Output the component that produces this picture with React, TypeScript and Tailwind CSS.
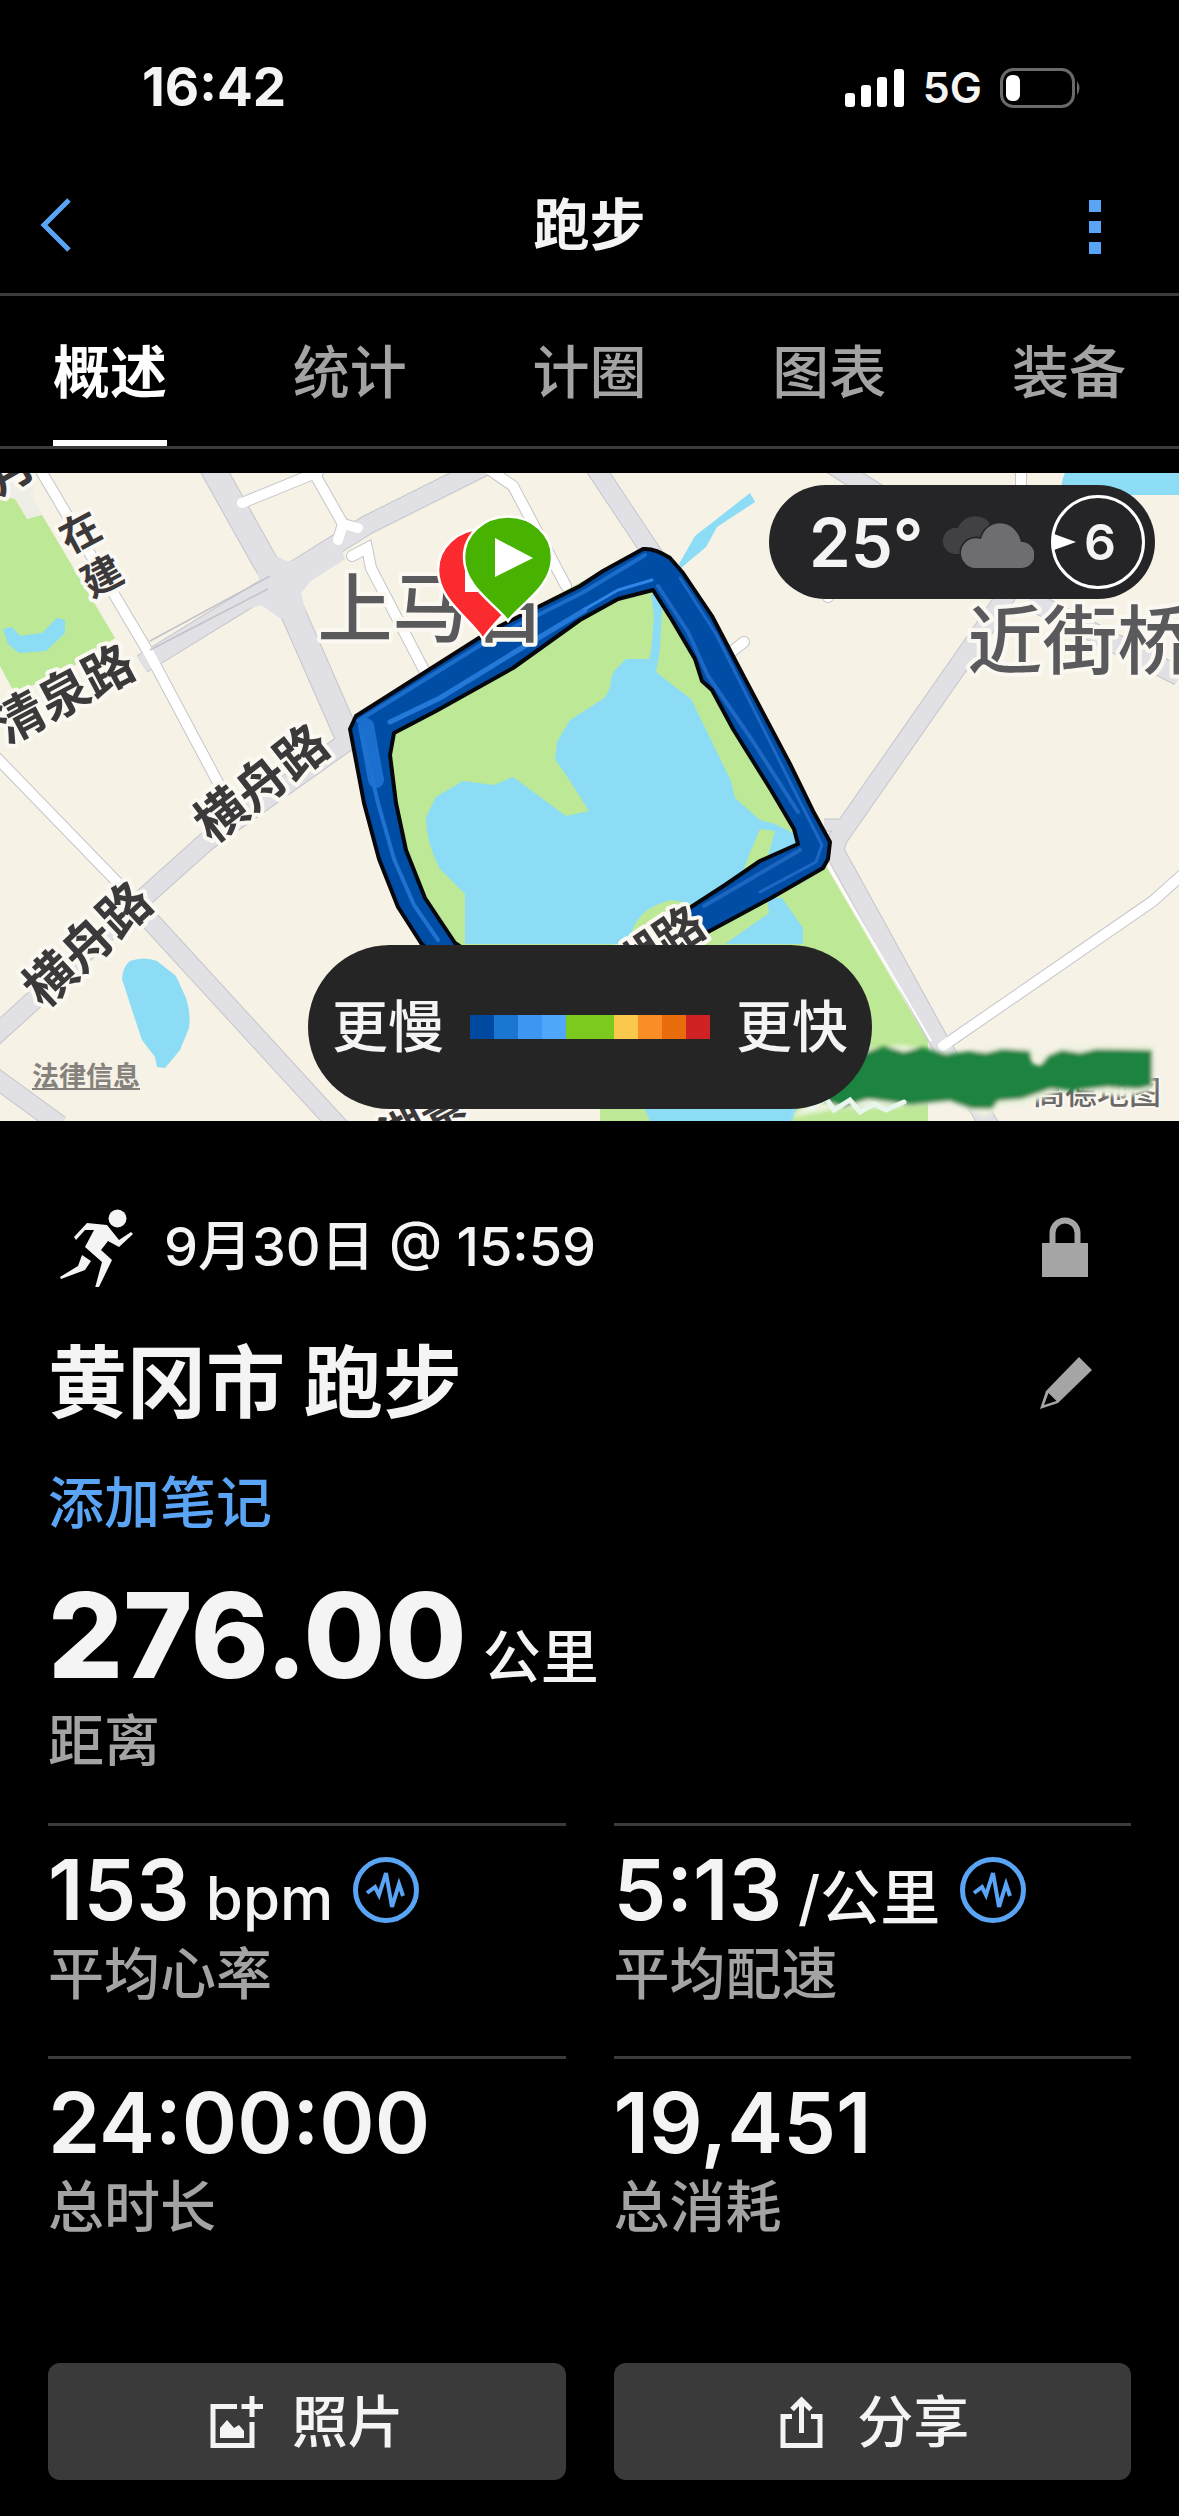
import type { ReactNode } from 'react'

const tabs = ['概述', '统计', '计圈', '图表', '装备']

const paceColors = [
  'bg-[#0049a0]',
  'bg-[#1b76d2]',
  'bg-[#3d96f2]',
  'bg-[#4fa7fb]',
  'bg-[#7bca1d]',
  'bg-[#7bca1d]',
  'bg-[#fac84c]',
  'bg-[#fa8d26]',
  'bg-[#e86b0c]',
  'bg-[#d02222]',
]

interface Stat {
  value: string
  unit?: string
  label: string
  graph?: boolean
}

const stats: Stat[] = [
  { value: '153', unit: 'bpm', label: '平均心率', graph: true },
  { value: '5:13', unit: '/公里', label: '平均配速', graph: true },
  { value: '24:00:00', label: '总时长' },
  { value: '19,451', label: '总消耗' },
]

export default function App() {
  return (
    <div className="min-h-screen bg-black pb-8 font-['Inter','Noto_Sans_CJK_SC',sans-serif] text-[#f4f4f4]">
      <StatusBar />

      <header className="flex h-[136px] items-center justify-between px-10">
        <button aria-label="返回" className="w-16 text-[#5aa4f5]">
          <svg width="32" height="54" viewBox="0 0 32 54" fill="none" stroke="currentColor" strokeWidth="5">
            <path d="M29 2L4 27l25 25" />
          </svg>
        </button>
        <h1 className="text-[56px] leading-none font-bold">跑步</h1>
        <button aria-label="更多" className="flex w-16 flex-col items-end gap-[9px] pt-1 pr-[38px]">
          <span className="h-3 w-3 bg-[#5aa4f5]" />
          <span className="h-3 w-3 bg-[#5aa4f5]" />
          <span className="h-3 w-3 bg-[#5aa4f5]" />
        </button>
      </header>

      <nav className="flex h-[156px] justify-between border-y-3 border-[#3b3b3b] px-[53px]">
        {tabs.map((tab, i) => (
          <button
            key={tab}
            className={
              i === 0
                ? 'border-b-6 border-white pt-2 text-[57px] leading-none font-bold text-white'
                : 'border-b-6 border-transparent pt-2 text-[57px] leading-none font-medium text-[#a3a3a3]'
            }
          >
            {tab}
          </button>
        ))}
      </nav>

      <section className="relative mt-6">
        <RouteMap />
        <WeatherBadge />
        <a href="#legal" className="absolute bottom-7 left-8 text-[27px] leading-8 font-bold text-[#85817c] underline">
          法律信息
        </a>
        <div className="absolute bottom-3 left-[308px] flex h-[164px] w-[564px] items-center justify-between rounded-full bg-[#252525] px-6 text-[56px] font-medium">
          <span>更慢</span>
          <div className="flex">
            {paceColors.map((color, i) => (
              <span key={i} className={`h-6 w-6 ${color}`} />
            ))}
          </div>
          <span>更快</span>
        </div>
      </section>

      <main className="px-12">
        <div className="mt-[86px] flex h-20 items-center justify-between pr-[43px]">
          <div className="flex items-center gap-6">
            <RunnerIcon />
            <p className="text-[54px] leading-none font-medium">9月30日 @ 15:59</p>
          </div>
          <svg width="46" height="60" viewBox="0 0 46 60" className="text-[#a5a5a5]">
            <path d="M10.500 30V16a12.500 12.500 0 0 1 25 0v14" fill="none" stroke="currentColor" strokeWidth="6" />
            <path d="M0 26h46v34H0z" fill="currentColor" />
          </svg>
        </div>

        <div className="mt-12 flex h-24 items-center justify-between pr-[39px]">
          <h2 className="text-[79px] leading-none font-bold">黄冈市 跑步</h2>
          <button aria-label="编辑">
            <svg width="52" height="52" viewBox="0 0 52 52" fill="#a5a5a5" fillRule="evenodd">
              <path d="M39 0l13 13-34 33L0 52l6-18zM8.500 36l-4.500 12 12.500-4z" />
            </svg>
          </button>
        </div>

        <a href="#note" className="mt-9 block w-fit text-[56px] leading-[72px] font-medium text-[#5aa4f5]">
          添加笔记
        </a>

        <div className="mt-9 flex items-baseline gap-4">
          <span className="text-[118px] leading-[120px] font-extrabold">276.00</span>
          <span className="text-[58px] leading-none font-medium">公里</span>
        </div>
        <p className="mt-2 text-[56px] leading-[76px] font-medium text-[#a3a3a3]">距离</p>

        <div className="mt-11 grid grid-cols-2 gap-x-12">
          {stats.map(stat => (
            <StatCell key={stat.label} {...stat} />
          ))}
        </div>

        <div className="mt-[74px] grid grid-cols-2 gap-x-12">
          <ActionButton label="照片">
            <svg width="54" height="52" viewBox="0 0 54 52" fill="none" stroke="currentColor" strokeWidth="5">
              <path d="M27 10.500H3v39h39V26" />
              <path d="M42 0v21M31.500 10.500H53" />
              <path d="M10 42V32l7-8 7 8 5-3 5 6v7z" fill="currentColor" stroke="none" />
            </svg>
          </ActionButton>
          <ActionButton label="分享">
            <svg width="54" height="52" viewBox="0 0 54 52" fill="none" stroke="currentColor" strokeWidth="5">
              <path d="M17 20.500H8v29h37v-29h-9" />
              <path d="M26.500 37V4M17 13.500L26.500 4l9.500 9.500" />
            </svg>
          </ActionButton>
        </div>
      </main>
    </div>
  )
}

function StatusBar() {
  return (
    <div className="flex h-[157px] items-center justify-between pt-[18px] pr-[97px] pl-[142px]">
      <span className="text-[53px] leading-none font-bold">16:42</span>
      <div className="flex items-center gap-[18px]">
        <svg width="60" height="38" viewBox="0 0 60 38" fill="#fff">
          <rect x="0" y="24" width="10" height="14" rx="3" />
          <rect x="16" y="16" width="10" height="22" rx="3" />
          <rect x="32" y="8" width="10" height="30" rx="3" />
          <rect x="49" y="0" width="10" height="38" rx="3" />
        </svg>
        <span className="text-[43px] leading-none font-semibold">5G</span>
        <svg width="82" height="40" viewBox="0 0 82 40">
          <rect x="1.500" y="1.500" width="72" height="37" rx="12" fill="none" stroke="#6a6a6a" strokeWidth="3" />
          <path d="M77 13q5 7 0 14z" fill="#6a6a6a" />
          <rect x="6" y="7" width="14" height="26" rx="6" fill="#fff" />
        </svg>
      </div>
    </div>
  )
}

function WeatherBadge() {
  return (
    <div className="absolute top-3 right-6 flex h-[114px] w-[386px] items-center justify-between rounded-full bg-[#252426] pr-2.5 pl-10">
      <span className="text-[67px] leading-none font-semibold">25°</span>
      <svg width="94" height="52" viewBox="0 0 94 52">
        <path d="M14 38a13 13 0 0 1 4-26C24-3 44-3 50 8L38 38z" fill="#414042" />
        <path
          d="M34 52a15 15 0 1 1 7-29C46 2 75 1 81 26a13 13 0 0 1 1 26z"
          fill="#6e6d6f"
          stroke="#252426"
          strokeWidth="3"
          paintOrder="stroke"
        />
      </svg>
      <div className="relative flex h-[94px] w-[94px] items-center justify-center rounded-full border-3 border-white pl-1">
        <svg width="22" height="16" viewBox="0 0 22 16" className="absolute left-0" fill="#fff">
          <path d="M0 0l22 8-22 8z" />
        </svg>
        <span className="text-[50px] leading-none font-semibold">6</span>
      </div>
    </div>
  )
}

function StatCell({ value, unit, label, graph }: Stat) {
  return (
    <div className="h-[233px] border-t-3 border-[#3b3b3b] pt-[18px]">
      <div className="flex h-[92px] items-center gap-5">
        <div className="flex items-baseline gap-4">
          <span className="text-[84px] leading-[92px] font-semibold">{value}</span>
          {unit && <span className="text-[60px] leading-none font-medium">{unit}</span>}
        </div>
        {graph && (
          <button aria-label={`${label}图表`}>
            <svg width="66" height="66" viewBox="0 0 66 66" fill="none" stroke="#5aa4f5">
              <circle cx="33" cy="33" r="30.500" strokeWidth="5" />
              <path d="M14 36l8-6 4 8 7-22 6 34 7-23 4 12" strokeWidth="4" />
            </svg>
          </button>
        )}
      </div>
      <p className="text-[56px] leading-[76px] font-medium text-[#a3a3a3]">{label}</p>
    </div>
  )
}

function ActionButton({ label, children }: { label: string; children: ReactNode }) {
  return (
    <button className="flex h-[117px] items-center justify-center gap-7 rounded-xl bg-[#3a3a3a] text-[56px] leading-none font-medium">
      {children}
      {label}
    </button>
  )
}

function RunnerIcon() {
  return (
    <svg width="92" height="80" viewBox="48 1206 92 80" fill="#f4f4f4">
      <circle cx="117.500" cy="1217.500" r="9" />
      <path d="M87 1222l20 2 12 15 12-8 2 2-14 13-11-6-7 9 11 10-14 29-3-1 7-26-17-15 9-17-9 0-9 10-2-3z" />
      <path d="M82 1254l9 6-6 9-24 9-1-2 18-11z" />
    </svg>
  )
}

// Casing first, then fill, so that crossings merge
const grayRoads = [
  'M208 460L264 560L283 590L344 729L352 745',
  'M485 466L367 525L287 575L142 664',
  'M-10 1040L34 1000L149 893L207 841L352 738',
  'M145 915L342 1130',
  'M-10 1074L60 1125',
  'M590 460L660 565',
  'M825 460L880 495',
  'M1010 590L981 633L838 838L834 850L939 1041L992 1130',
  'M1030 600L1179 676',
]

const whiteRoads = [
  'M38 466L150 655L222 790',
  'M242 503L318 472',
  'M310 466L343 524L338 540',
  'M343 524L358 528',
  'M352 556L367 548L371 568L425 672',
  'M490 470L513 486L566 586',
  'M-5 756L120 885',
  'M1021 460L1021 495',
  'M828 597L850 570',
  'M730 653L744 642',
  'M943 1046L1153 901L1190 868',
]

const halo = {
  stroke: '#fbf8f2',
  strokeWidth: 8,
  strokeLinejoin: 'round',
  paintOrder: 'stroke',
  textAnchor: 'middle',
  dominantBaseline: 'central',
} as const

function RoadLabel({ x, y, angle, size, children }: { x: number; y: number; angle: number; size: number; children: string }) {
  return (
    <text {...halo} x={x} y={y} fontSize={size} fontWeight={700} fill="#3c393b" transform={`rotate(${angle} ${x} ${y})`}>
      {children}
    </text>
  )
}

function RouteMap() {
  return (
    <svg viewBox="0 473 1179 648" className="block w-full" role="img" aria-label="路线地图">
      <defs>
        <filter id="smudge" x="-5%" y="-30%" width="110%" height="160%">
          <feGaussianBlur stdDeviation="2" />
        </filter>
        <clipPath id="park">
          <path d="M356 716L490 631L643 549L670 558L830 842L823 868L706 933L690 960H470L421 943L379 859L350 729z" />
        </clipPath>
      </defs>

      <rect x="0" y="473" width="1179" height="648" fill="#f6f2e6" />
      <path d="M0 473h35l-2 24 10 17-16 5-12-20-15-2z" fill="#eeeee6" />

      {/* Parks and water */}
      <path d="M0 496l15 3 12 20 15-4 73 123-38 26-62 30-15-28z" fill="#bde896" />
      <path d="M3 629l9-2 8 9 22-3 15-15 8 2v13l-19 18-27 2-11-9z" fill="#8cdcf6" />
      <path d="M130 961q14-5 27 0l19 15 10 22q5 14 3 30l-9 22-15 18-8-1-2-10-13-17-10-30-10-31q1-13 8-18z" fill="#8cdcf6" />
      <path d="M782 894l44-28 102 175v80H600v-60l100-128z" fill="#bde896" />
      <path d="M767 898h15l21 30v16h-78l44-31z" fill="#8cdcf6" />
      <path d="M640 1100h160l-8 21H650z" fill="#8cdcf6" />
      <path d="M1065 473h114v22H1062q-2-12 3-22z" fill="#8cdcf6" />
      <path d="M750 493l5 9-38 25-11 20-25 21-2-4 16-28z" fill="#8cdcf6" />

      {/* Roads */}
      <g fill="none" stroke="#c6c5cb">
        {whiteRoads.map(d => (
          <path key={d} d={d} strokeWidth="12" strokeLinecap="round" />
        ))}
        {grayRoads.map(d => (
          <path key={d} d={d} strokeWidth="20" />
        ))}
        <path d={grayRoads[0]} strokeWidth="26" />
        <path d="M824 825h22" strokeWidth="13" />
      </g>
      <path d="M253 545l20 10 14 6 24 0 30-14 4 12-34 22-10 12 6 24-26 2-20-14-26 8-40 14 66-36z" fill="#e0e0e5" />
      <g fill="none" stroke="#e0e0e5">
        {grayRoads.map(d => (
          <path key={d} d={d} strokeWidth="18" />
        ))}
        <path d={grayRoads[0]} strokeWidth="24" />
        <path d="M824 825h22" strokeWidth="11" />
      </g>
      <g fill="none" stroke="#ffffff" strokeWidth="10" strokeLinecap="round">
        {whiteRoads.map(d => (
          <path key={d} d={d} />
        ))}
      </g>
      <path d="M150 641L270 576M150 650L268 589" fill="none" stroke="#c2c2c8" strokeWidth="1.500" />
      <path d="M828 865l103 176" stroke="#fff" strokeWidth="2" />

      {/* Park inside the loop */}
      <g clipPath="url(#park)">
        <rect x="340" y="540" width="500" height="420" fill="#bde896" />
        <path
          d="M603 699q8-8 8-20l3-8 12-12h23l2-8 3-35-3-22h5l6 13-2 44-4 21 23 18 12 9 23 47 17 35 4 17 25 22 15 4 40 20-60 60-50 40H465v-50l-25-25q-14-26-14-52l10-20 27-16 31 4 19-8 53 39 23-5-19-30-15-22 2-17 13-22z"
          fill="#8cdcf6"
        />
        <path d="M760 829l15 2-8 28-26 18 8-22zM628 945q6-38 44-45l30 6-10 40z" fill="#bde896" />
      </g>

      {/* Recorded track */}
      <path
        fillRule="evenodd"
        d="M356 716L490 631L580 586L603 571L643 549Q655 548 670 558L683 573L712 616L744 677L790 764L813 811L830 842L828 859L823 868L771 898L706 933L640 972H450L421 943L398 907L379 859L364 803L350 729z
        M394 733L390 755L396 803L406 850L425 898L455 943L480 960H600L691 907L725 885L760 861L798 844L794 829L771 790L733 729L712 690L702 681L695 659L672 620L653 590L618 599L580 620L513 668L436 711z"
        fill="#004da6"
        stroke="#08080c"
        strokeWidth="4"
        strokeLinejoin="round"
      />
      <g fill="none" strokeLinejoin="round" strokeLinecap="round">
        <path d="M358 721L492 638L582 593L645 555" stroke="#1c6cc9" strokeWidth="4" />
        <path d="M390 722L440 698L515 652L585 610" stroke="#2478d8" strokeWidth="5" />
        <path d="M585 609L618 590L652 580" stroke="#2f86e6" strokeWidth="3" />
        <path d="M366 726L376 780" stroke="#1b6fce" strokeWidth="16" />
        <path d="M362 736L378 803L394 859L414 905L438 940" stroke="#1f72d0" strokeWidth="4" />
        <path d="M658 586L688 632L708 676L752 740L798 812" stroke="#1c68c4" strokeWidth="4" />
        <path d="M680 578L716 634L790 782L822 845L816 862L760 892" stroke="#1c68c4" strokeWidth="3" />
        <path d="M800 850L735 888L704 906" stroke="#1c66c0" strokeWidth="4" />
      </g>

      {/* Labels */}
      <RoadLabel x={10} y={470} angle={-30} size={46}>月</RoadLabel>
      <RoadLabel x={80} y={532} angle={-28} size={40}>在</RoadLabel>
      <RoadLabel x={102} y={576} angle={-28} size={40}>建</RoadLabel>
      <RoadLabel x={64} y={694} angle={-28} size={50}>清泉路</RoadLabel>
      <RoadLabel x={261} y={783} angle={-38} size={51}>横舟路</RoadLabel>
      <RoadLabel x={87} y={944} angle={-43} size={51}>横舟路</RoadLabel>
      <RoadLabel x={659} y={945} angle={-34} size={48}>湖路</RoadLabel>
      <RoadLabel x={422} y={1118} angle={-28} size={44}>湖景</RoadLabel>
      <g fill="#5a5a5c" fontSize="75" fontWeight="500">
        <text {...halo} x="430" y="608">上马石</text>
        <text {...halo} x="1080" y="640">近街桥</text>
      </g>

      {/* Finish and start pins */}
      <g stroke="#fff" strokeWidth="2.500">
        <path d="M483 639C470 618 438 600 438 570a43 40 0 0 1 88 0C526 600 496 618 483 639z" fill="#fb2a2f" />
        <path d="M465 562h36v30h-36z" fill="#fff" stroke="none" />
        <path d="M508 621C496 604 464 588 464 557a43.500 40 0 0 1 88 0C552 588 520 604 508 621z" fill="#47b300" />
      </g>
      <path d="M495 538l38 20-38 19z" fill="#fff" />

      {/* Attribution and the painted-over park name */}
      <text x="1033" y="1104" fontSize="32" fontWeight="500" fill="#6b6966" stroke="#fbf8f2" strokeWidth="4" paintOrder="stroke">
        高德地图
      </text>
      <g filter="url(#smudge)">
        <path d="M862 1053l40-4 50 8 52-6 30 2 12 8 22-12h82v38l-26 6-60-8-38 16-26 2-16 10-30-14-60 4-60 2-30 6z" fill="none" stroke="#eef3df" strokeWidth="8" />
        <path
          d="M866 1052l18-6 20 6 18-5 24 7 24-3 16 2 16-4 28 2 2 12 8 3 8-10 14-6 18 3 16-4 56 1v36l-14 3-30-2-34 4-24-2-28 10-24 2-6 8-20 0-22-8-40 4-42-6-24 8-22-6-10-16z"
          fill="#1b833f"
        />
      </g>
      <path d="M812 1108l14-10 8 12 16-10 10 12 14-8 12 6 18-8" fill="none" stroke="#e9f6ee" strokeWidth="5" strokeLinecap="round" />
    </svg>
  )
}
